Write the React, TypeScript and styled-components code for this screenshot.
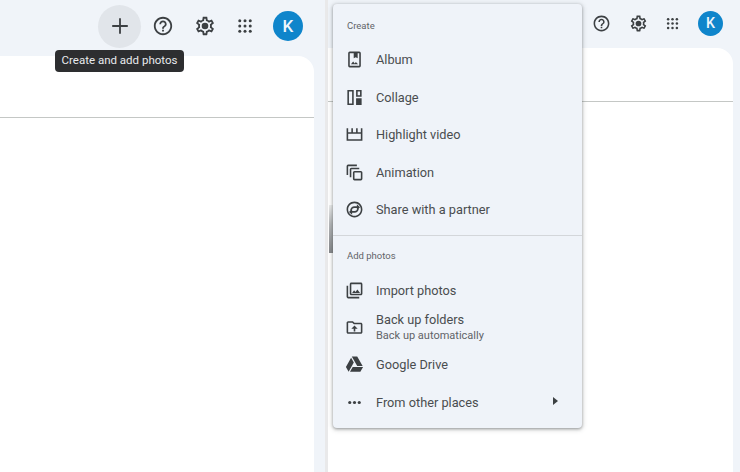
import React from "react";
import styled, { createGlobalStyle } from "styled-components";

const GlobalStyle = createGlobalStyle`
  html, body {
    margin: 0;
    padding: 0;
    width: 740px;
    height: 472px;
    overflow: hidden;
    background: #f0f4f9;
    font-family: Roboto, "Liberation Sans", sans-serif;
  }
`;

const Page = styled.div`
  position: relative;
  display: flex;
  width: 740px;
  height: 472px;
  background: #f0f4f9;
`;

const LeftPane = styled.section`
  display: flex;
  flex-direction: column;
  width: 325px;
  flex: none;
`;

const RightPane = styled.section`
  display: flex;
  flex-direction: column;
  flex: 1;
  padding-right: 7px;
`;

const Divider = styled.div`
  width: 3px;
  flex: none;
  background: #e9e9ea;
`;

const LeftBar = styled.header`
  display: flex;
  align-items: center;
  justify-content: flex-end;
  height: 56px;
  padding: 0 13px 4px 0;
  box-sizing: border-box;
`;

const RightBar = styled.header`
  display: flex;
  align-items: center;
  justify-content: flex-end;
  height: 48px;
  padding: 0 1px 2px 0;
  box-sizing: border-box;
`;

const IconSlot = styled.div<{ $w: number; $active?: boolean }>`
  display: flex;
  align-items: center;
  justify-content: center;
  flex: none;
  width: ${(p) => p.$w}px;
  height: ${(p) => (p.$active ? p.$w : 30)}px;
  border-radius: 50%;
  color: #3c4043;
  background: ${(p) => (p.$active ? "#e1e5ea" : "transparent")};
`;

const Avatar = styled.div<{ $size: number }>`
  display: flex;
  align-items: center;
  justify-content: center;
  flex: none;
  width: ${(p) => p.$size}px;
  height: ${(p) => p.$size}px;
  border-radius: 50%;
  background: #0f85cb;
  color: #eef6fb;
  font-size: ${(p) => p.$size * 0.57}px;
  font-weight: 500;
`;

const Card = styled.div<{ $lineAt: number; $leftFlush?: boolean }>`
  flex: 1;
  background: #fff;
  border-radius: 0 16px 0 0;
  margin-right: ${(p) => (p.$leftFlush ? 11 : 0)}px;
  padding-top: ${(p) => p.$lineAt}px;
`;

const Rule = styled.div`
  height: 1px;
  background: #c4c7c5;
`;

const Tooltip = styled.div`
  position: absolute;
  left: 55px;
  top: 50px;
  width: 129px;
  height: 22px;
  border-radius: 4px;
  background: #2d2e30;
  color: #e8eaed;
  font-size: 11.5px;
  line-height: 21px;
  text-align: center;
`;

const Handle = styled.div`
  position: absolute;
  left: 329px;
  top: 205px;
  width: 4px;
  height: 48px;
  background: linear-gradient(#eceded, #b4b6b8 40%, #85878a);
`;

const Menu = styled.nav`
  position: absolute;
  left: 333px;
  top: 4px;
  width: 249px;
  height: 424px;
  box-sizing: border-box;
  padding-top: 12px;
  background: #eff3f9;
  border-radius: 4px;
  box-shadow: 0 1px 3px rgba(60, 64, 67, 0.45), 0 1px 5px 1px rgba(60, 64, 67, 0.18);
  color: #4a4d4f;
`;

const GroupLabel = styled.div<{ $h: number }>`
  height: ${(p) => p.$h}px;
  padding-left: 14px;
  font-size: 9.5px;
  line-height: 20px;
  color: #5f6368;
`;

const Sep = styled.div`
  height: 1px;
  margin: 6.5px 0 10px;
  background: #d3d6da;
`;

const Item = styled.div<{ $h?: number }>`
  position: relative;
  display: flex;
  align-items: center;
  height: ${(p) => p.$h ?? 37.5}px;
  padding-left: 12px;
  font-size: 12.75px;
`;

const ItemIcon = styled.span`
  display: flex;
  width: 19px;
  height: 19px;
  margin-right: 12px;
  flex: none;
  color: #3c4043;
`;

const ItemText = styled.div`
  display: flex;
  flex-direction: column;
`;

const SubText = styled.span`
  font-size: 11px;
  line-height: 15px;
  color: #5f6368;
`;

const MainText = styled.span`
  line-height: 16px;
`;

const Caret = styled.span`
  position: absolute;
  right: 24px;
  top: 13px;
  width: 0;
  height: 0;
  border-left: 5px solid #3c4043;
  border-top: 4px solid transparent;
  border-bottom: 4px solid transparent;
`;

const Svg = ({ size = 19, children }: { size?: number; children: React.ReactNode }) => (
  <svg width={size} height={size} viewBox="0 0 24 24" fill="currentColor">
    {children}
  </svg>
);

const PlusIcon = ({ size }: { size: number }) => (
  <Svg size={size}>
    <path d="M11 3.5h2V11h7.5v2H13v7.5h-2V13H3.5v-2H11z" />
  </Svg>
);

const HelpIcon = ({ size }: { size: number }) => (
  <Svg size={size}>
    <path d="M11 18h2v-2h-2v2zm1-16C6.48 2 2 6.48 2 12s4.48 10 10 10 10-4.48 10-10S17.52 2 12 2zm0 18c-4.41 0-8-3.59-8-8s3.59-8 8-8 8 3.59 8 8-3.59 8-8 8zm0-14c-2.21 0-4 1.79-4 4h2c0-1.1.9-2 2-2s2 .9 2 2c0 2-3 1.75-3 5h2c0-2.25 3-2.5 3-5 0-2.21-1.79-4-4-4z" />
  </Svg>
);

const GearIcon = ({ size }: { size: number }) => (
  <Svg size={size}>
    <path d="M19.43 12.98c.04-.32.07-.64.07-.98 0-.34-.03-.66-.07-.98l2.11-1.65c.19-.15.24-.42.12-.64l-2-3.46c-.09-.16-.26-.25-.44-.25-.06 0-.12.01-.17.03l-2.49 1c-.52-.4-1.08-.73-1.69-.98l-.38-2.65C14.46 2.18 14.25 2 14 2h-4c-.25 0-.46.18-.49.42l-.38 2.65c-.61.25-1.17.59-1.69.98l-2.49-1c-.06-.02-.12-.03-.18-.03-.17 0-.34.09-.43.25l-2 3.46c-.13.22-.07.49.12.64l2.11 1.65c-.04.32-.07.65-.07.98 0 .33.03.66.07.98l-2.11 1.65c-.19.15-.24.42-.12.64l2 3.46c.09.16.26.25.44.25.06 0 .12-.01.17-.03l2.49-1c.52.4 1.08.73 1.69.98l.38 2.65c.03.24.24.42.49.42h4c.25 0 .46-.18.49-.42l.38-2.65c.61-.25 1.17-.59 1.69-.98l2.49 1c.06.02.12.03.18.03.17 0 .34-.09.43-.25l2-3.46c.12-.22.07-.49-.12-.64l-2.11-1.65zm-1.98-1.71c.04.31.05.52.05.73 0 .21-.02.43-.05.73l-.14 1.13.89.7 1.08.84-.7 1.21-1.27-.51-1.04-.42-.9.68c-.43.32-.84.56-1.25.73l-1.06.43-.16 1.13-.2 1.35h-1.4l-.19-1.35-.16-1.13-1.06-.43c-.43-.18-.83-.41-1.23-.71l-.91-.7-1.06.43-1.27.51-.7-1.21 1.08-.84.89-.7-.14-1.13c-.03-.31-.05-.54-.05-.74s.02-.43.05-.73l.14-1.13-.89-.7-1.08-.84.7-1.21 1.27.51 1.04.42.9-.68c.43-.32.84-.56 1.25-.73l1.06-.43.16-1.13.2-1.35h1.39l.19 1.35.16 1.13 1.06.43c.43.18.83.41 1.23.71l.91.7 1.06-.43 1.27-.51.7 1.21-1.07.85-.89.7.14 1.13z" />
    <circle cx="12" cy="12" r="3.6" />
  </Svg>
);

const AppsIcon = ({ size }: { size: number }) => (
  <Svg size={size}>
    {[5, 12, 19].map((y) =>
      [5, 12, 19].map((x) => <circle key={`${x}-${y}`} cx={x} cy={y} r="2" />)
    )}
  </Svg>
);

const AlbumIcon = () => (
  <Svg>
    <path d="M6 2h12a2 2 0 0 1 2 2v16a2 2 0 0 1-2 2H6a2 2 0 0 1-2-2V4a2 2 0 0 1 2-2zm0 2v16h12V4h-2v6.5l-2.5-1.5-2.5 1.5V4H6zm1.5 14l2.8-3.6 2 2.5 1.4-1.8 2.8 2.9H7.5z" />
  </Svg>
);

const CollageIcon = () => (
  <Svg>
    <path d="M3 2.5h8v19H3v-19zm2 2v15h4v-15H5zM14 2.5h7V11h-7V2.5zm2 2V9h3V4.5h-3zM14 13h7v8.5h-7z" />
  </Svg>
);

const VideoIcon = () => (
  <Svg>
    <path d="M2 4h2v5h4V4h2v5h4V4h2v5h4V4h2v16H2V4zm2 7v7h16v-7H4z" />
  </Svg>
);

const AnimationIcon = () => (
  <Svg>
    <path d="M15 2H4a2 2 0 0 0-2 2v11h2V4h11V2zm3 4H8a2 2 0 0 0-2 2v10h2V8h10V6zm2 4h-8a2 2 0 0 0-2 2v8a2 2 0 0 0 2 2h8a2 2 0 0 0 2-2v-8a2 2 0 0 0-2-2zm0 10h-8v-8h8v8z" />
  </Svg>
);

const ShareIcon = () => (
  <Svg>
    <path d="M12 2C6.48 2 2 6.48 2 12s4.48 10 10 10 10-4.48 10-10S17.52 2 12 2zm0 18c-4.41 0-8-3.59-8-8s3.59-8 8-8 8 3.59 8 8-3.59 8-8 8z" />
    <path d="M7.5 13.5a4.5 4.5 0 0 1 4.5-4.5h4M16.5 10.5a4.5 4.5 0 0 1-4.5 4.5H8" fill="none" stroke="currentColor" strokeWidth="2" />
    <path d="M15 5.5l4 3.5-4 3.5zM9 11.5L5 15l4 3.5z" />
  </Svg>
);

const ImportIcon = () => (
  <Svg>
    <path d="M20 4v12H8V4h12m0-2H8c-1.1 0-2 .9-2 2v12c0 1.1.9 2 2 2h12c1.1 0 2-.9 2-2V4c0-1.1-.9-2-2-2zm-8.5 9.67l1.69 2.26 2.48-3.1L19 15H9zM2 6v14c0 1.1.9 2 2 2h14v-2H4V6H2z" />
  </Svg>
);

const FolderIcon = () => (
  <Svg>
    <path d="M20 6h-8l-2-2H4c-1.1 0-2 .9-2 2v12c0 1.1.9 2 2 2h16c1.1 0 2-.9 2-2V8c0-1.1-.9-2-2-2zm0 12H4V6h5.17l2 2H20v10zM12 9.5L8 13.5h3V17h2v-3.5h3l-4-4z" />
  </Svg>
);

const DriveIcon = () => (
  <Svg>
    <path d="M7.71 3.5L1.15 15l3.43 6 6.55-11.5M9.73 15L6.3 21h13.12l3.43-6M22.28 14L15.42 2H8.58l6.85 12h6.85z" />
  </Svg>
);

const MoreIcon = () => (
  <Svg>
    <circle cx="6" cy="12" r="2" />
    <circle cx="12" cy="12" r="2" />
    <circle cx="18" cy="12" r="2" />
  </Svg>
);

export default function App() {
  return (
    <>
      <GlobalStyle />
      <Page>
        <LeftPane>
          <LeftBar>
            <IconSlot $w={43} $active>
              <PlusIcon size={22} />
            </IconSlot>
            <IconSlot $w={43}>
              <HelpIcon size={22} />
            </IconSlot>
            <IconSlot $w={42}>
              <GearIcon size={22} />
            </IconSlot>
            <IconSlot $w={38}>
              <AppsIcon size={18} />
            </IconSlot>
            <IconSlot $w={48}>
              <Avatar $size={30}>K</Avatar>
            </IconSlot>
          </LeftBar>
          <Card $lineAt={61} $leftFlush>
            <Rule />
          </Card>
        </LeftPane>
        <Divider />
        <RightPane>
          <RightBar>
            <IconSlot $w={37}>
              <HelpIcon size={19} />
            </IconSlot>
            <IconSlot $w={36}>
              <GearIcon size={19} />
            </IconSlot>
            <IconSlot $w={33}>
              <AppsIcon size={15} />
            </IconSlot>
            <IconSlot $w={43}>
              <Avatar $size={25}>K</Avatar>
            </IconSlot>
          </RightBar>
          <Card $lineAt={53}>
            <Rule />
          </Card>
        </RightPane>
        <Tooltip>Create and add photos</Tooltip>
        <Handle />
        <Menu>
          <GroupLabel $h={25}>Create</GroupLabel>
          <Item><ItemIcon><AlbumIcon /></ItemIcon>Album</Item>
          <Item><ItemIcon><CollageIcon /></ItemIcon>Collage</Item>
          <Item><ItemIcon><VideoIcon /></ItemIcon>Highlight video</Item>
          <Item><ItemIcon><AnimationIcon /></ItemIcon>Animation</Item>
          <Item><ItemIcon><ShareIcon /></ItemIcon>Share with a partner</Item>
          <Sep />
          <GroupLabel $h={26}>Add photos</GroupLabel>
          <Item><ItemIcon><ImportIcon /></ItemIcon>Import photos</Item>
          <Item $h={36.5}>
            <ItemIcon><FolderIcon /></ItemIcon>
            <ItemText>
              <MainText>Back up folders</MainText>
              <SubText>Back up automatically</SubText>
            </ItemText>
          </Item>
          <Item><ItemIcon><DriveIcon /></ItemIcon>Google Drive</Item>
          <Item><ItemIcon><MoreIcon /></ItemIcon>From other places<Caret /></Item>
        </Menu>
      </Page>
    </>
  );
}
